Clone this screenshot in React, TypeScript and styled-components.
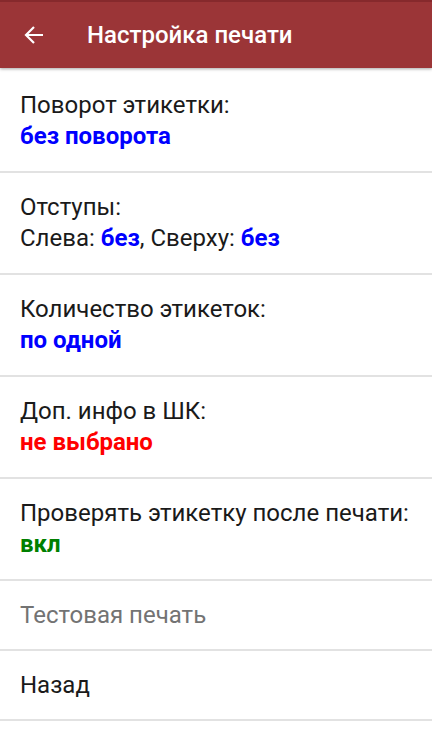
import React from "react";
import styled, { createGlobalStyle } from "styled-components";

const Global = createGlobalStyle`
  html, body { margin: 0; padding: 0; background: #fff; }
  body { font-family: Roboto, "Noto Sans", sans-serif; }
`;

const Page = styled.div`
  width: 432px;
  min-height: 741px;
  background: #fff;
  display: flex;
  flex-direction: column;
`;

const Header = styled.header`
  height: 68px;
  background: #9b3537;
  border-top: 2px solid #86292c;
  box-sizing: border-box;
  display: flex;
  align-items: center;
  box-shadow: 0 1px 3px rgba(0, 0, 0, 0.35);
  position: relative;
  z-index: 1;
`;

const BackButton = styled.div`
  width: 87px;
  display: flex;
  align-items: center;
  padding-left: 24px;
  box-sizing: border-box;
`;

const Title = styled.h1`
  margin: 0;
  color: #fff;
  font-size: 24px;
  font-weight: 500;
`;

const List = styled.div`
  display: flex;
  flex-direction: column;
  padding-top: 3px;
`;

const Item = styled.div<{ $tall?: boolean }>`
  height: ${(p) => (p.$tall ? "100px" : "68px")};
  padding: 0 20px;
  display: flex;
  flex-direction: column;
  justify-content: center;
  border-bottom: 2px solid #e2e2e2;
  box-sizing: content-box;
`;

const Line = styled.div<{ $muted?: boolean }>`
  font-size: 24px;
  line-height: 31px;
  color: ${(p) => (p.$muted ? "#737373" : "#1a1a1a")};
`;

const Value = styled.span<{ $color: string }>`
  font-weight: 700;
  color: ${(p) => p.$color};
`;

const BLUE = "#0000ff";

export default function App() {
  return (
    <Page>
      <Global />
      <Header>
        <BackButton>
          <svg width="20" height="20" viewBox="0 0 20 20" fill="none">
            <path d="M19 10H2M10 2L2 10l8 8" stroke="#fff" strokeWidth="2.2" />
          </svg>
        </BackButton>
        <Title>Настройка печати</Title>
      </Header>
      <List>
        <Item $tall>
          <Line>Поворот этикетки:</Line>
          <Line>
            <Value $color={BLUE}>без поворота</Value>
          </Line>
        </Item>
        <Item $tall>
          <Line>Отступы:</Line>
          <Line>
            Слева: <Value $color={BLUE}>без</Value>, Сверху: <Value $color={BLUE}>без</Value>
          </Line>
        </Item>
        <Item $tall>
          <Line>Количество этикеток:</Line>
          <Line>
            <Value $color={BLUE}>по одной</Value>
          </Line>
        </Item>
        <Item $tall>
          <Line>Доп. инфо в ШК:</Line>
          <Line>
            <Value $color="#ff0000">не выбрано</Value>
          </Line>
        </Item>
        <Item $tall>
          <Line>Проверять этикетку после печати:</Line>
          <Line>
            <Value $color="#007f00">вкл</Value>
          </Line>
        </Item>
        <Item>
          <Line $muted>Тестовая печать</Line>
        </Item>
        <Item>
          <Line>Назад</Line>
        </Item>
      </List>
    </Page>
  );
}
